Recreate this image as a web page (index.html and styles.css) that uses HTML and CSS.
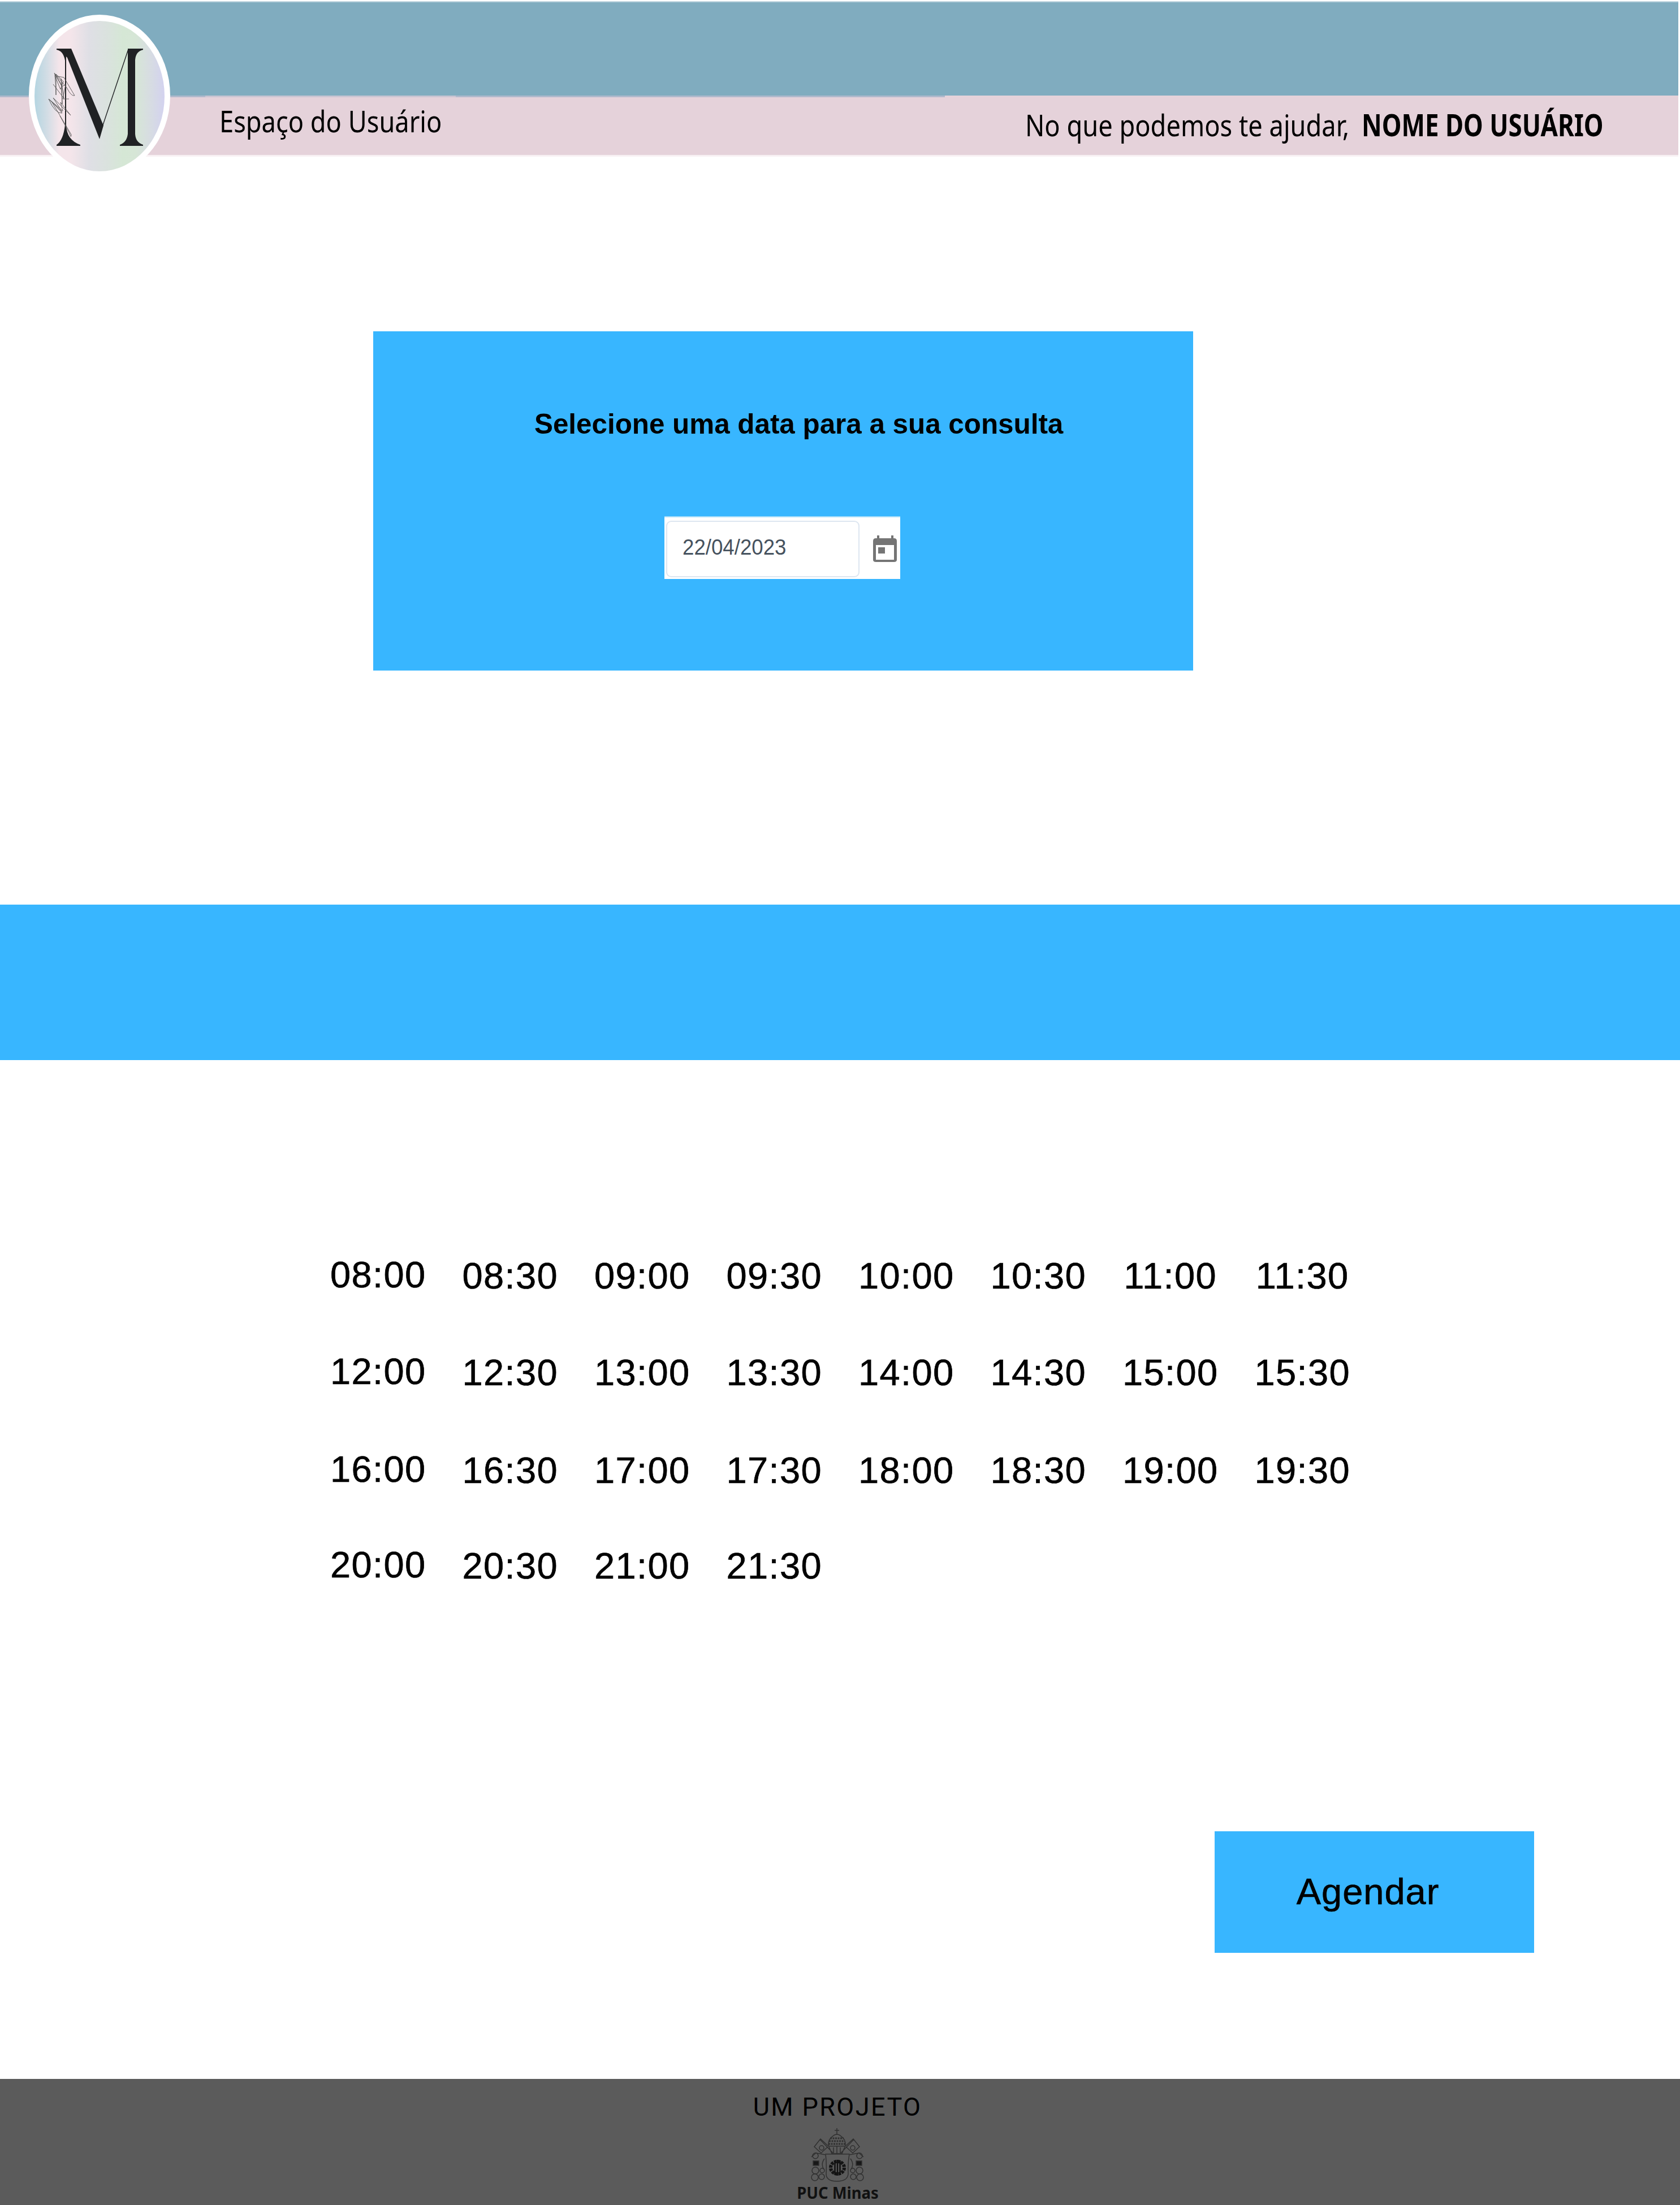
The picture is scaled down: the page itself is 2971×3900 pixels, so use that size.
FILE: index.html
```html
<!DOCTYPE html>
<html lang="pt-BR">
<head>
<meta charset="utf-8">
<title>Espaço do Usuário</title>
<link rel="stylesheet" href="styles.css">
</head>
<body>
<header class="header">
  <div class="topbar"></div>
  <div class="userbar">
    <span class="space">Espaço do Usuário</span>
    <span class="ask">No que podemos te ajudar,</span>
    <strong class="name">NOME DO USUÁRIO</strong>
  </div>
  <svg class="logo" viewBox="0 0 250 286">
    <defs>
      <linearGradient id="pastel">
        <stop offset="0" stop-color="#b4d5e1"/><stop offset=".1" stop-color="#d3dde5"/><stop offset=".19" stop-color="#f4e5ea"/><stop offset=".28" stop-color="#f4e5ea"/><stop offset=".42" stop-color="#dfdfe5"/><stop offset=".56" stop-color="#dae2de"/><stop offset=".68" stop-color="#d5e7d5"/><stop offset=".78" stop-color="#d6e6d6"/><stop offset=".88" stop-color="#d7dde1"/><stop offset="1" stop-color="#d3d2ef"/>
      </linearGradient>
    </defs>
    <ellipse cx="125" cy="143" rx="125" ry="143" fill="#fff"/>
    <ellipse cx="125" cy="144" rx="115" ry="133" fill="url(#pastel)"/>
    <g fill="#202224">
      <path d="M49 60H75L132 196L125 220L68 76L66 74V195Q67 222 91 230V232H49V230Q61 222 64 195V81Q61 64 49 62Z"/>
      <path d="M175 60H202V62Q189 65 188 80V211Q189 226 202 230V232H161V230Q173 226 175 211Z"/>
    </g>
    <path d="M176 61L130 198" fill="none" stroke="#202224" stroke-width="1.4"/>
    <path d="M45 103Q55 118 58 126L46 105Q48 125 48 142V105L61 118L56 132L46 108L62 111L81 143Q75 145 67 129L45 103M43 123L62 148L57 113L59 158L58 127L65 124L60 149L71 149M35 149L59 172L43 147L74 178L56 155L60 170L35 149Q47 176 59 174L40 153L75 212Q75 220 72 210L55 179" fill="none" stroke="#555" stroke-width=".9"/>
  </svg>
</header>
<main class="main">
  <section class="card">
    <h1 class="title">Selecione uma data para a sua consulta</h1>
    <div class="date">
      <div class="field"><span class="value">22/04/2023</span></div>
      <svg class="calendar" viewBox="0 0 42 48">
        <path d="M7 0h4v5h21V0h4v5h1q5 0 5 5v33q0 4-5 4H5q-5 0-5-4V10q0-5 5-5h2zM5 17v26h32V17z" fill="#757575" fill-rule="evenodd"/>
        <path d="M9 21h12v11H9z" fill="#757575"/>
      </svg>
    </div>
  </section>
  <div class="band"></div>
  <section class="times">
    <span class="first">08:00</span><span>08:30</span><span>09:00</span><span>09:30</span><span>10:00</span><span>10:30</span><span>11:00</span><span>11:30</span>
    <span class="first">12:00</span><span>12:30</span><span>13:00</span><span>13:30</span><span>14:00</span><span>14:30</span><span>15:00</span><span>15:30</span>
    <span class="first">16:00</span><span>16:30</span><span>17:00</span><span>17:30</span><span>18:00</span><span>18:30</span><span>19:00</span><span>19:30</span>
    <span class="first">20:00</span><span>20:30</span><span>21:00</span><span>21:30</span>
  </section>
  <button class="submit">Agendar</button>
</main>
<footer class="footer">
  <span class="project">UM PROJETO</span>
  <svg class="crest" viewBox="0 0 96 96" fill="none" stroke="#303030" stroke-width="1.5">
    <path d="M47 0v12M43 4h8M32 32Q31 20 39 15Q47 7 55 15Q63 20 62 32Z"/>
    <path d="M35 18h24M33 23h28M32 28h30" stroke-width="3" stroke-dasharray="3 1.5"/>
    <path d="M33 33l5 12h18l5-12M41 34v10M47 32v14M53 34v10M31 31L18 19l-11 14l12 11l12-11M63 31l13-12l11 14l-12 11l-12-11M17 20l23 24M77 20L54 44"/>
    <circle cx="20" cy="35" r="4"/><circle cx="75" cy="35" r="4"/>
    <path d="M27 46H69Q66 62 67 81Q66 94 47 94Q28 94 28 81Q29 62 27 46Z"/>
    <path d="M26 47L10 44L2 51M70 47l16-3l8 7M25 54q-7 10-1 19M71 54q7 10 1 19"/>
    <circle cx="9" cy="49" r="5"/><circle cx="87" cy="49" r="5"/><circle cx="9" cy="75" r="6"/><circle cx="87" cy="75" r="6"/><circle cx="8" cy="87" r="6"/><circle cx="88" cy="87" r="6"/><circle cx="20" cy="86" r="5"/><circle cx="76" cy="86" r="5"/><circle cx="21" cy="75" r="4"/><circle cx="75" cy="75" r="4"/>
    <path d="M5 58h10v8H5zM81 58h10v8H81z" fill="#181818"/>
    <ellipse cx="48" cy="70" rx="12" ry="11" stroke="#151515" stroke-width="6" stroke-dasharray="4.500 1.500"/>
    <path d="M43.500 57v26M48 56v28M52.500 57v26" stroke="#111" stroke-width="2.500"/>
  </svg>
  <span class="puc">PUC Minas</span>
</footer>
</body>
</html>
```
FILE: styles.css
```css
* { box-sizing: border-box; }
body {
  margin: 0;
  width: 2971px;
  height: 3900px;
  display: flex;
  flex-direction: column;
  background: #fff;
  color: #000;
  font-family: "Liberation Sans", Arial, sans-serif;
}
span, strong, h1 { white-space: nowrap; }

.header { position: relative; height: 277px; padding: 2px 3px 0 0; }
.topbar { height: 167px; background: #80acbf; border-top: 2px solid #bfd5df; }
.userbar {
  height: 108px;
  padding-top: 3px;
  display: flex;
  background:
    linear-gradient(90deg, #b0b9cc 363px, #c9c4d2 363px 806px, #b0b9cc 806px 1671px, #e5d2da 1671px) 0 0 / 100% 3px no-repeat,
    #e5d2da;
  border-bottom: 3px solid #f8f0f3;
  font: 53px/72px "Noto Sans", sans-serif;
}
.space { width: 1425px; margin-left: 388px; padding-top: 6px; transform: scaleX(.853); transform-origin: left; }
.ask { width: 595px; padding-top: 13px; transform: scaleX(.853); transform-origin: left; }
.name { padding-top: 13px; transform: scaleX(.829); transform-origin: left; }
.logo { position: absolute; left: 51px; top: 26px; width: 250px; height: 286px; }

.main { flex: 1; display: flex; flex-direction: column; }
.card {
  width: 1450px;
  height: 600px;
  margin: 309px 0 0 660px;
  padding-top: 136px;
  background: #38b6ff;
}
.title { margin: 0 0 0 285px; font-size: 50px; line-height: 56px; transform: scaleX(.987); transform-origin: left; }
.date {
  width: 417px;
  height: 111px;
  margin: 135px 0 0 515px;
  padding: 6px 6px 3px 3px;
  display: flex;
  justify-content: space-between;
  background: #fff;
  border-top: 2px solid #a8defa;
}
.field {
  width: 342px;
  padding-left: 27px;
  border: 2px solid #dde6f0;
  border-radius: 9px;
  color: #46525e;
  font-size: 39px;
  line-height: 90px;
}
.value { display: inline-block; transform: scaleX(.94); transform-origin: left; }
.calendar { width: 42px; height: 48px; margin: 26px 0 0; }

.band { height: 275px; margin-top: 414px; background: #38b6ff; }
.times {
  display: grid;
  grid-template-columns: repeat(8, 233.5px);
  grid-template-rows: 171px 173px 169px 74px;
  margin: 345px 0 0 552px;
  font-size: 65px;
  line-height: 74px;
  letter-spacing: 1.4px;
  text-align: center;
  -webkit-text-stroke: .7px #000;
}
.times .first { margin-top: -2px; }
.submit {
  width: 565px;
  height: 215px;
  margin: 432px 0 0 2148px;
  padding: 0 23px 2px 0;
  border: 0;
  background: #38b6ff;
  color: #000;
  font: 65px "Liberation Sans", Arial, sans-serif;
  letter-spacing: 1px;
  -webkit-text-stroke: .7px #000;
}

.footer {
  height: 223px;
  padding: 20px 9px 0 0;
  display: flex;
  flex-direction: column;
  align-items: center;
  background: #5b5b5b;
}
.project { font: 45px/60px Roboto, sans-serif; letter-spacing: 2.4px; }
.crest { width: 96px; height: 96px; margin-top: 7px; }
.puc { font: bold 29px/34px "Noto Sans", sans-serif; color: #111; margin-top: 1px; transform: scaleX(.945); }
```
